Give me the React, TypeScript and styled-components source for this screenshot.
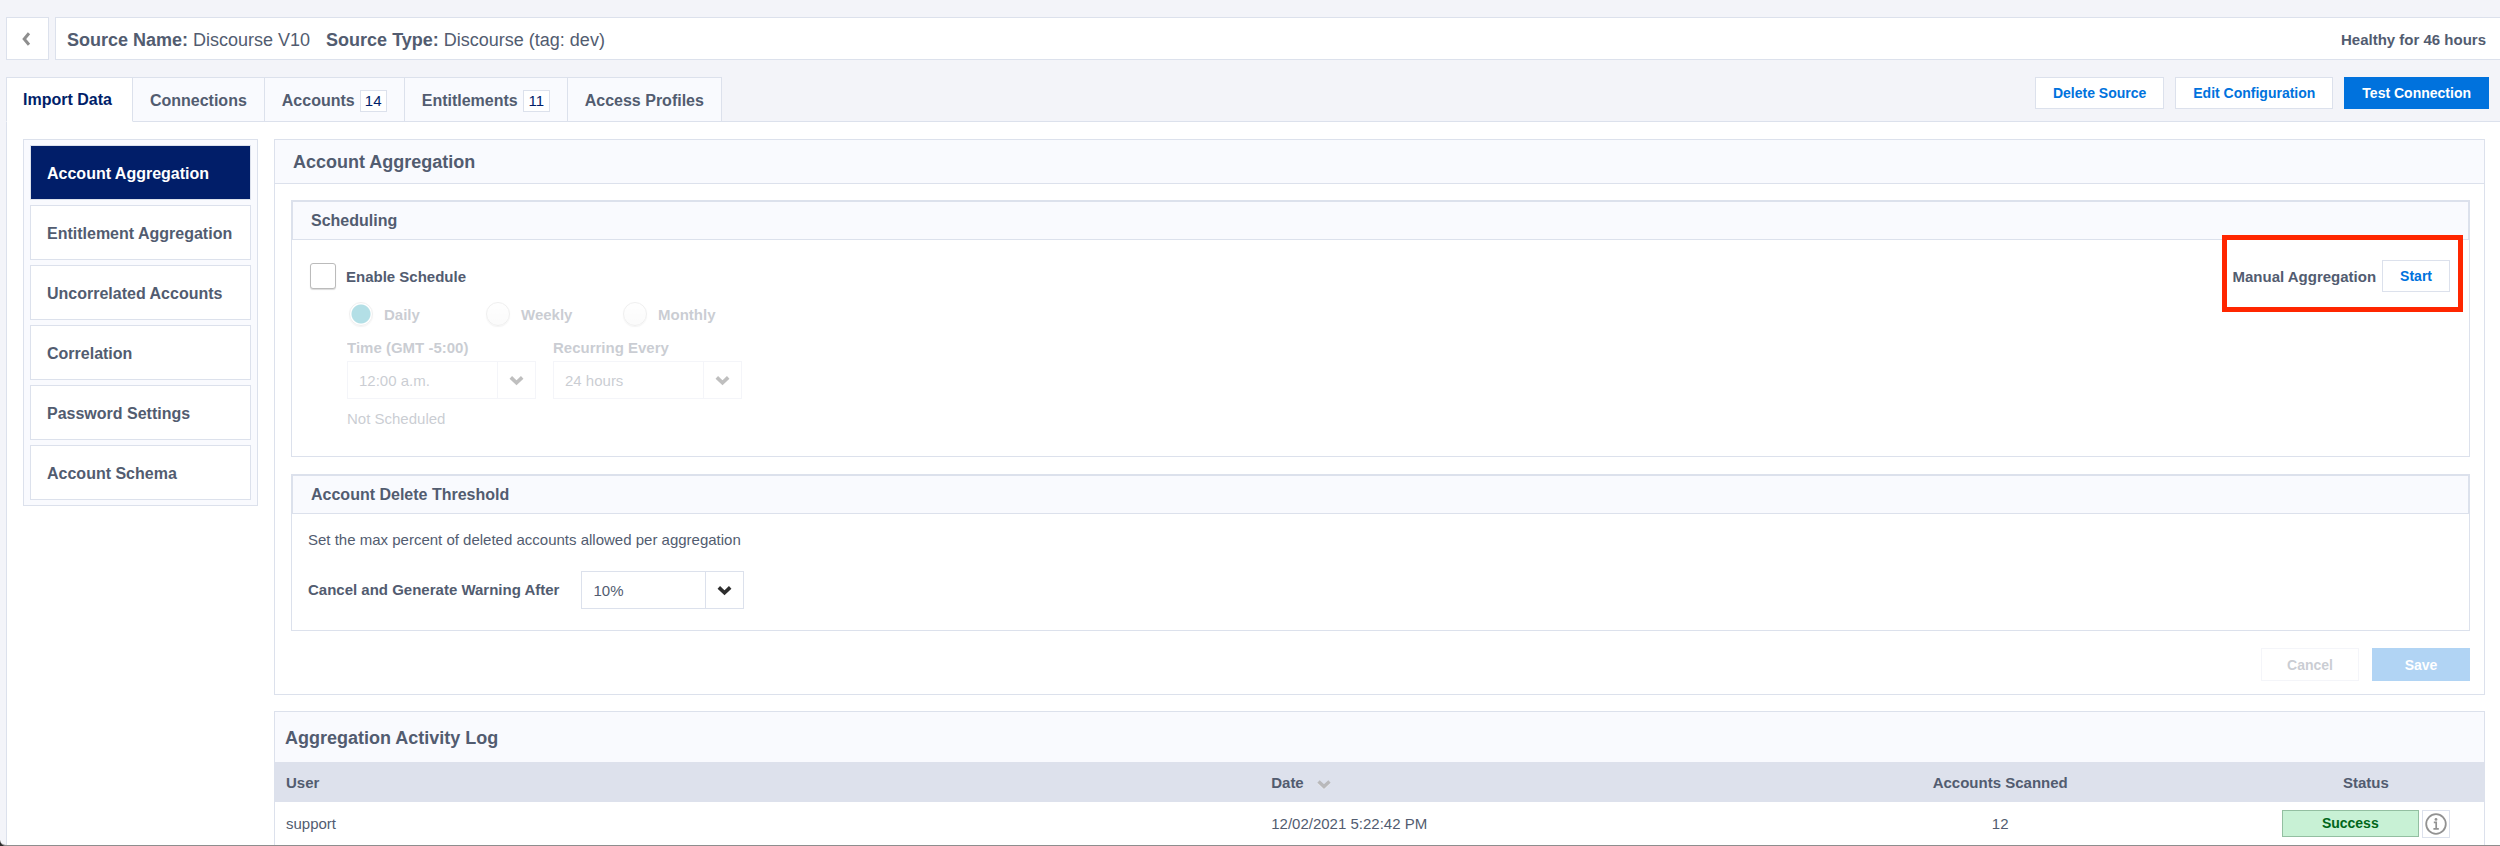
import React from "react";
import styled, { createGlobalStyle, css } from "styled-components";

const color = {
  page: "#f3f4f9",
  panel: "#f9fafe",
  line: "#dce1ec",
  text: "#525c70",
  navy: "#011e69",
  blue: "#0072dd",
  highlight: "#ff2600",
};

const GlobalStyle = createGlobalStyle`
  *, *::before, *::after { box-sizing: border-box; }
  body { margin: 0; background: #2b2b2b; }
  body, button, input, select {
    font-family: "Liberation Sans", Arial, Helvetica, sans-serif;
    color: ${color.text};
  }
  h1, h2, h3, p, fieldset { margin: 0; padding: 0; border: 0; font-weight: 400; }
`;

const Page = styled.div`
  display: flex;
  flex-direction: column;
  min-height: 100vh;
  padding: 17px 0 0 6px;
  background: ${color.page};
  border-bottom: 1px solid #8e8e8e;
  border-bottom-left-radius: 6px;
`;

const Header = styled.header`
  display: flex;
  gap: 6px;
  height: 43px;
`;

const BackButton = styled.button`
  display: flex;
  align-items: center;
  justify-content: center;
  width: 43px;
  padding: 0 4px 0 0;
  background: #fff;
  border: 1px solid ${color.line};
`;

const TitleBar = styled.div`
  flex: 1;
  display: flex;
  align-items: center;
  justify-content: space-between;
  padding: 2px 14px 0 11px;
  background: #fff;
  border: 1px solid ${color.line};
  border-right: 0;
`;

const Title = styled.h1`
  display: flex;
  gap: 16px;
  font-size: 18px;
  line-height: 22px;
`;

const Health = styled.span`
  font-size: 15px;
  font-weight: 700;
`;

const TabBar = styled.div`
  display: flex;
  justify-content: space-between;
  margin-top: 17px;
  border-bottom: 1px solid ${color.line};
`;

const Tabs = styled.nav`
  display: flex;
  margin-bottom: -1px;
`;

const Tab = styled.button<{ $active?: boolean }>`
  display: flex;
  align-items: center;
  gap: 5px;
  height: 45px;
  padding: 2px 17px 0;
  font-size: 16px;
  font-weight: 700;
  background: ${color.panel};
  border: 1px solid ${color.line};
  border-left: 0;
  ${(p) =>
    p.$active &&
    css`
      padding: 0 20px 0 16px;
      color: ${color.navy};
      background: #fff;
      border-left: 1px solid ${color.line};
      border-bottom-color: #fff;
    `}
`;

const Count = styled.span`
  width: 27px;
  font-size: 15px;
  line-height: 20px;
  text-align: center;
  font-weight: 400;
  color: ${color.navy};
  background: #fff;
  border: 1px solid ${color.line};
`;

const HeaderActions = styled.div`
  display: flex;
  gap: 11px;
  margin-right: 11px;
`;

const Button = styled.button<{ $primary?: boolean; $wide?: boolean }>`
  height: 32px;
  padding: 0 17px;
  font-size: 14px;
  font-weight: 700;
  color: ${(p) => (p.$primary ? "#fff" : color.blue)};
  background: ${(p) => (p.$primary ? color.blue : "#fff")};
  border: 1px solid ${(p) => (p.$primary ? color.blue : color.line)};
  ${(p) =>
    p.$wide &&
    css`
      width: 98px;
      height: 33px;
    `}
  &:disabled {
    opacity: 0.3;
    color: ${(p) => (p.$primary ? "#fff" : color.text)};
  }
`;

const Workspace = styled.div`
  flex: 1;
  display: flex;
  align-items: flex-start;
  gap: 16px;
  padding: 17px 15px 0 16px;
  background: #fff;
  border-left: 1px solid ${color.line};
`;

const SideMenu = styled.nav`
  flex: none;
  display: flex;
  flex-direction: column;
  gap: 5px;
  width: 235px;
  padding: 5px 6px;
  background: ${color.panel};
  border: 1px solid ${color.line};
`;

const SideItem = styled.button<{ $active?: boolean }>`
  height: 55px;
  padding: 2px 16px 0;
  text-align: left;
  white-space: nowrap;
  font-size: 16px;
  font-weight: 700;
  color: ${(p) => (p.$active ? "#fff" : color.text)};
  background: ${(p) => (p.$active ? color.navy : "#fff")};
  border: 1px solid ${color.line};
`;

const Main = styled.main`
  flex: 1;
  min-width: 0;
  display: flex;
  flex-direction: column;
  gap: 16px;
`;

const Card = styled.section`
  border: 1px solid ${color.line};
`;

const CardTitle = styled.h2`
  padding: 2px 18px 0;
  font-size: 18px;
  font-weight: 700;
  line-height: 41px;
  background: ${color.panel};
  border-bottom: 1px solid ${color.line};
`;

const CardBody = styled.div`
  display: flex;
  flex-direction: column;
  gap: 17px;
  padding: 16px 14px 13px 16px;
`;

const Group = styled.section`
  border: 1px solid ${color.line};
`;

const GroupTitle = styled.h3`
  padding: 0 18px;
  font-size: 16px;
  font-weight: 700;
  line-height: 37px;
  background: ${color.panel};
  border: 1px solid ${color.line};
`;

const ScheduleBody = styled.div`
  display: flex;
  justify-content: space-between;
  align-items: flex-start;
  padding: 0 6px 28px 18px;
`;

const ScheduleForm = styled.div`
  padding-top: 23px;
`;

const CheckLabel = styled.label`
  display: flex;
  align-items: center;
  gap: 10px;
  font-size: 15px;
  font-weight: 700;
`;

const CheckBox = styled.input`
  appearance: none;
  width: 26px;
  height: 26px;
  margin: 0;
  background: #fff;
  border: 1px solid #bbb;
  border-radius: 3px;
  box-shadow: 0 1px 1px rgba(0, 0, 0, 0.15);
`;

const ScheduleOptions = styled.fieldset`
  padding: 13px 0 0 37px;
  opacity: 0.3;
`;

const RadioRow = styled.div`
  display: flex;
  padding-left: 2px;
`;

const RadioLabel = styled.label`
  display: flex;
  align-items: center;
  gap: 11px;
  width: 137px;
  font-size: 15px;
  font-weight: 700;
`;

const Radio = styled.input`
  appearance: none;
  width: 24px;
  height: 24px;
  margin: 0;
  border: 1px solid #ccc;
  border-radius: 50%;
  background: linear-gradient(#fff, #f2f2f2);
  box-shadow: 0 1px 1px rgba(0, 0, 0, 0.15);
  &:checked {
    background: radial-gradient(circle, #0899ad 9px, #fff 10px);
  }
`;

const FieldRow = styled.div`
  display: flex;
  gap: 17px;
  padding-top: 13px;
`;

const Field = styled.label`
  display: flex;
  flex-direction: column;
  gap: 4px;
  font-size: 15px;
  font-weight: 700;
  line-height: 18px;
`;

const InlineField = styled.label`
  display: flex;
  align-items: center;
  gap: 22px;
  padding-top: 22px;
  font-size: 15px;
  font-weight: 700;
`;

const SelectBox = styled.span<{ $width: number }>`
  position: relative;
  width: ${(p) => p.$width}px;
`;

const SelectInput = styled.select`
  appearance: none;
  display: block;
  width: 100%;
  height: 38px;
  padding: 0 50px 0 11px;
  font-size: 15px;
  background: #fff;
  border: 1px solid ${color.line};
  border-radius: 0;
  opacity: 1;
`;

const SelectArrow = styled.span`
  position: absolute;
  inset: 1px 1px 1px auto;
  display: flex;
  align-items: center;
  justify-content: center;
  width: 38px;
  border-left: 1px solid ${color.line};
  pointer-events: none;
`;

const Note = styled.p`
  padding-top: 11px;
  font-size: 15px;
  line-height: 18px;
`;

const ManualRun = styled.div`
  display: flex;
  align-items: center;
  gap: 6px;
  height: 77px;
  margin-top: -5px;
  padding: 5px 8px 0 5px;
  font-size: 15px;
  font-weight: 700;
  border: 5px solid ${color.highlight};
`;

const ThresholdBody = styled.div`
  padding: 17px 16px 21px;
  font-size: 15px;
  line-height: 18px;
`;

const FormActions = styled.div`
  display: flex;
  justify-content: flex-end;
  gap: 13px;
`;

const LogTitle = styled.h2`
  padding: 2px 10px 0;
  font-size: 18px;
  font-weight: 700;
  line-height: 48px;
  background: ${color.panel};
`;

const LogCard = styled(Card)`
  border-bottom: 0;
`;

const LogTable = styled.table`
  width: 100%;
  table-layout: fixed;
  border-collapse: collapse;
  font-size: 15px;
`;

const HeadCell = styled.th<{ $width: string; $center?: boolean }>`
  width: ${(p) => p.$width};
  height: 40px;
  padding: 0 11px;
  text-align: ${(p) => (p.$center ? "center" : "left")};
  background: #dde1ec;
`;

const SortIcon = styled.svg`
  margin-left: 13px;
  vertical-align: -2px;
`;

const Cell = styled.td<{ $center?: boolean }>`
  height: 43px;
  padding: 0 11px;
  text-align: ${(p) => (p.$center ? "center" : "left")};
`;

const StatusCell = styled.div`
  display: flex;
  align-items: center;
  justify-content: center;
  gap: 3px;
`;

const Badge = styled.span`
  width: 137px;
  font-size: 14px;
  font-weight: 700;
  line-height: 25px;
  color: #00661a;
  background: #c8f1d5;
  border: 1px solid #93bfa1;
`;

const InfoButton = styled.button`
  display: flex;
  align-items: center;
  justify-content: center;
  width: 28px;
  height: 28px;
  padding: 0;
  background: #fff;
  border: 1px solid ${color.line};
`;

const Chevron = () => (
  <svg width="15" height="11" viewBox="0 0 15 11" aria-hidden="true">
    <path d="M1.8 2.4 7.5 7.8l5.7-5.4" fill="none" stroke="#2e2e2e" strokeWidth="3.6" />
  </svg>
);

const Select = ({ value, width }: { value: string; width: number }) => (
  <SelectBox $width={width}>
    <SelectInput defaultValue={value}>
      <option>{value}</option>
    </SelectInput>
    <SelectArrow>
      <Chevron />
    </SelectArrow>
  </SelectBox>
);

const sections = [
  "Account Aggregation",
  "Entitlement Aggregation",
  "Uncorrelated Accounts",
  "Correlation",
  "Password Settings",
  "Account Schema",
];

const tabs: { label: string; count?: number }[] = [
  { label: "Import Data" },
  { label: "Connections" },
  { label: "Accounts", count: 14 },
  { label: "Entitlements", count: 11 },
  { label: "Access Profiles" },
];

export default function App() {
  return (
    <>
      <GlobalStyle />
      <Page>
        <Header>
          <BackButton aria-label="Back">
            <svg width="10" height="14" viewBox="0 0 10 14" aria-hidden="true">
              <path d="M8 1.2 3.2 7 8 12.8" fill="none" stroke="#8e8e8e" strokeWidth="3" />
            </svg>
          </BackButton>
          <TitleBar>
            <Title>
              <span>
                <b>Source Name:</b> Discourse V10
              </span>
              <span>
                <b>Source Type:</b> Discourse (tag: dev)
              </span>
            </Title>
            <Health>Healthy for 46 hours</Health>
          </TitleBar>
        </Header>

        <TabBar>
          <Tabs>
            {tabs.map((tab, i) => (
              <Tab key={tab.label} $active={i === 0}>
                {tab.label}
                {tab.count !== undefined && <Count>{tab.count}</Count>}
              </Tab>
            ))}
          </Tabs>
          <HeaderActions>
            <Button>Delete Source</Button>
            <Button>Edit Configuration</Button>
            <Button $primary>Test Connection</Button>
          </HeaderActions>
        </TabBar>

        <Workspace>
          <SideMenu>
            {sections.map((name, i) => (
              <SideItem key={name} $active={i === 0}>
                {name}
              </SideItem>
            ))}
          </SideMenu>

          <Main>
            <Card>
              <CardTitle>Account Aggregation</CardTitle>
              <CardBody>
                <Group>
                  <GroupTitle>Scheduling</GroupTitle>
                  <ScheduleBody>
                    <ScheduleForm>
                      <CheckLabel>
                        <CheckBox type="checkbox" />
                        Enable Schedule
                      </CheckLabel>
                      <ScheduleOptions disabled>
                        <RadioRow>
                          {["Daily", "Weekly", "Monthly"].map((name) => (
                            <RadioLabel key={name}>
                              <Radio type="radio" name="frequency" defaultChecked={name === "Daily"} />
                              {name}
                            </RadioLabel>
                          ))}
                        </RadioRow>
                        <FieldRow>
                          <Field>
                            Time (GMT -5:00)
                            <Select value="12:00 a.m." width={189} />
                          </Field>
                          <Field>
                            Recurring Every
                            <Select value="24 hours" width={189} />
                          </Field>
                        </FieldRow>
                        <Note>Not Scheduled</Note>
                      </ScheduleOptions>
                    </ScheduleForm>
                    <ManualRun>
                      Manual Aggregation
                      <Button>Start</Button>
                    </ManualRun>
                  </ScheduleBody>
                </Group>

                <Group>
                  <GroupTitle>Account Delete Threshold</GroupTitle>
                  <ThresholdBody>
                    <p>Set the max percent of deleted accounts allowed per aggregation</p>
                    <InlineField>
                      Cancel and Generate Warning After
                      <Select value="10%" width={163} />
                    </InlineField>
                  </ThresholdBody>
                </Group>

                <FormActions>
                  <Button $wide disabled>
                    Cancel
                  </Button>
                  <Button $wide $primary disabled>
                    Save
                  </Button>
                </FormActions>
              </CardBody>
            </Card>

            <LogCard>
              <LogTitle>Aggregation Activity Log</LogTitle>
              <LogTable>
                <thead>
                  <tr>
                    <HeadCell $width="44.6%">User</HeadCell>
                    <HeadCell $width="22.3%">
                      Date
                      <SortIcon width="14" height="11" viewBox="0 0 14 11" aria-hidden="true">
                        <path d="M1.5 3.6 7 8.8l5.5-5.2" fill="none" stroke="#f4f4f6" strokeWidth="2.6" />
                        <path d="M1.5 2.4 7 7.6l5.5-5.2" fill="none" stroke="#b9b9bb" strokeWidth="3.4" />
                      </SortIcon>
                    </HeadCell>
                    <HeadCell $width="22.4%" $center>
                      Accounts Scanned
                    </HeadCell>
                    <HeadCell $width="10.7%" $center>
                      Status
                    </HeadCell>
                  </tr>
                </thead>
                <tbody>
                  <tr>
                    <Cell>support</Cell>
                    <Cell>12/02/2021 5:22:42 PM</Cell>
                    <Cell $center>12</Cell>
                    <Cell $center>
                      <StatusCell>
                        <Badge>Success</Badge>
                        <InfoButton aria-label="Details">
                          <svg width="22" height="22" viewBox="0 0 22 22" aria-hidden="true">
                            <circle cx="11" cy="11" r="9.8" fill="none" stroke="#929292" strokeWidth="1.8" />
                            <circle cx="11" cy="6.4" r="1.4" fill="#929292" />
                            <path d="M8.8 9.4h2.4v6.2M8.4 15.8h5.4" fill="none" stroke="#929292" strokeWidth="1.7" />
                          </svg>
                        </InfoButton>
                      </StatusCell>
                    </Cell>
                  </tr>
                </tbody>
              </LogTable>
            </LogCard>
          </Main>
        </Workspace>
      </Page>
    </>
  );
}
